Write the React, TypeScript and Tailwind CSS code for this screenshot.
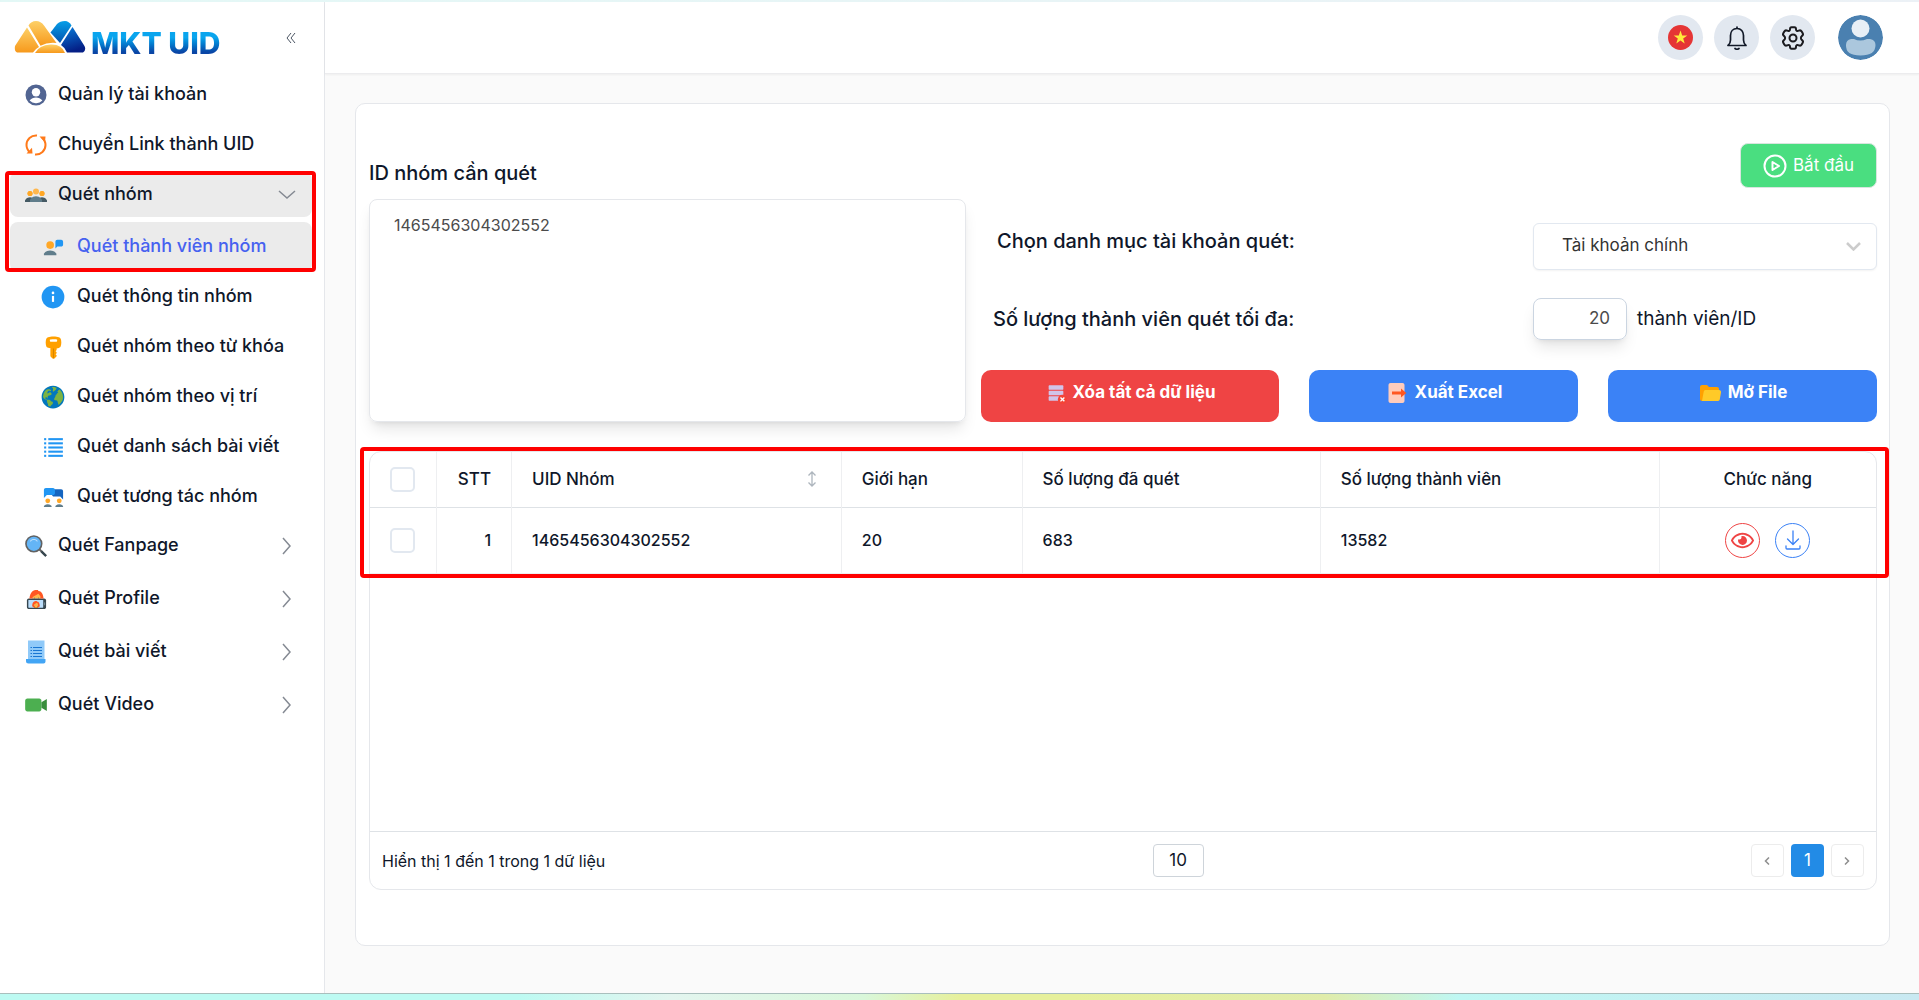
import React, { useState } from "react";
import {
  FcCollaboration,
  FcConferenceCall,
  FcDeleteDatabase,
  FcExport,
  FcGlobe,
  FcInfo,
  FcKey,
  FcList,
  FcOpenedFolder,
  FcSearch,
  FcSelfie,
  FcVideoCall,
  FcVoicePresentation,
} from "react-icons/fc";
import { FaRegEye } from "react-icons/fa";

interface NavItem {
  label: string;
  icon: React.ReactNode;
}

const UserIcon = () => (
  <svg className="w-[22px] h-[22px]" viewBox="0 0 22 22" aria-hidden="true">
    <circle cx="11" cy="11" r="10.5" fill="#526592" />
    <circle cx="11" cy="8.2" r="4.2" fill="#fff" />
    <path d="M4.6 16.6c1.6-2.4 4-3.2 6.4-3.2s4.800.8 6.400 3.200A8.600 8.600 0 0 1 11 19.200a8.600 8.600 0 0 1-6.400-2.600z" fill="#fff" />
  </svg>
);

const SyncIcon = () => (
  <svg className="w-[22px] h-[22px]" viewBox="0 0 22 22" fill="none" stroke="#ff7a1a" strokeWidth="2" aria-hidden="true">
    <path d="M12 1.500C6 1 1.500 5.500 1.500 11c0 3 1.300 5.500 3.500 7.300" />
    <path d="M10 20.500c6 .5 10.500-4 10.500-9.500 0-3-1.300-5.500-3.500-7.300" />
    <path d="M14.500 2.500h6l-.5 5.800z M7.500 19.500h-6L7 13.700z" fill="#ff7a1a" stroke="none" />
  </svg>
);

const PostIcon = () => (
  <svg className="w-[22px] h-[24px]" viewBox="0 0 22 24" aria-hidden="true">
    <path d="M3 0.500h16.500v19H3z" fill="#90caf9" />
    <path d="M1 19h19.500v2.500a2 2 0 0 1-2 2H3.500A2.500 2.500 0 0 1 1 21z" fill="#42a5f5" />
    <path d="M5.500 7.500h1.500M8 7.500h9M5.500 10.500h1.500M8 10.500h9M5.500 13.500h1.500M8 13.500h9M5.500 16.500h1.500M8 16.500h9" stroke="#1976d2" strokeWidth="1.200" />
  </svg>
);

const Chevron = ({ className }: { className: string }) => (
  <svg className={className} viewBox="0 0 18 18" fill="none" stroke="#858a93" strokeWidth="1.500" aria-hidden="true">
    <path d="M5 1l7 8-7 8" />
  </svg>
);

const TOP_ITEMS: NavItem[] = [
  { label: "Quản lý tài khoản", icon: <UserIcon /> },
  { label: "Chuyển Link thành UID", icon: <SyncIcon /> },
];

const GROUP_ITEMS: NavItem[] = [
  { label: "Quét thành viên nhóm", icon: <FcVoicePresentation size={23} /> },
  { label: "Quét thông tin nhóm", icon: <FcInfo size={26} /> },
  { label: "Quét nhóm theo từ khóa", icon: <FcKey size={25} /> },
  { label: "Quét nhóm theo vị trí", icon: <FcGlobe size={26} /> },
  { label: "Quét danh sách bài viết", icon: <FcList size={25} /> },
  { label: "Quét tương tác nhóm", icon: <FcCollaboration size={23} /> },
];

const BOTTOM_ITEMS: NavItem[] = [
  { label: "Quét Fanpage", icon: <FcSearch size={26} className="shrink-0" /> },
  { label: "Quét Profile", icon: <FcSelfie size={23} className="shrink-0" /> },
  { label: "Quét bài viết", icon: <PostIcon /> },
  { label: "Quét Video", icon: <FcVideoCall size={26} className="shrink-0" /> },
];

const COLUMNS = ["UID Nhóm", "Giới hạn", "Số lượng đã quét", "Số lượng thành viên"];

const ROWS = [
  { id: 1, uid: "1465456304302552", limit: 20, scanned: 683, members: 13582 },
];

const Logo = () => (
  <a href="#" className="flex items-end gap-[5px]" aria-label="MKT UID">
    <svg className="w-[72px] h-[33px]" viewBox="0 0 72 33" aria-hidden="true">
      <defs>
        <linearGradient id="gold" x1="0" y1="0" x2="0" y2="1">
          <stop offset="0" stopColor="#fdd067" />
          <stop offset="1" stopColor="#f7991c" />
        </linearGradient>
        <linearGradient id="navy" x1="0" y1="0" x2="0.300" y2="1">
          <stop offset="0" stopColor="#0a7fdc" />
          <stop offset="1" stopColor="#041f86" />
        </linearGradient>
        <linearGradient id="sky" x1="0" y1="0" x2="0" y2="1">
          <stop offset="0" stopColor="#069fe8" />
          <stop offset="1" stopColor="#0453b0" />
        </linearGradient>
      </defs>
      <path d="M13 6.500L25 26q-4 2-6 5.500H3Q0 30 1 25z" fill="url(#gold)" />
      <path d="M14.500 4.500Q17 0 22 0t8 4.500l12.500 17.500q-9-1-16 2.800z" fill="url(#gold)" />
      <path d="M21 32q4-8 15.500-8.500T51 32z" fill="url(#gold)" />
      <path d="M36.500 11.500L43 3q3-3 8-3 4 0 6.500 4.500L46 22z" fill="url(#sky)" />
      <path d="M58.500 6l12 19q2 4-1.500 6.500H53q-2-5-6-7.500z" fill="url(#navy)" />
    </svg>
    <span className="bg-linear-to-b from-[#0aa5ee] from-30% to-[#0a45a5] to-80% bg-clip-text text-[30px] leading-[21px] py-1 -mb-1 font-extrabold text-transparent">
      MKT UID
    </span>
  </a>
);

const Sidebar: React.FC = () => {
  const [isOpen, setIsOpen] = useState(true);

  return (
    <aside className="w-[325px] shrink-0 border-r border-[#e5e7eb] bg-white">
      <div className="flex items-start justify-between pt-[19px] pl-[14px] pr-7 h-[70px]">
        <Logo />
        <button type="button" className="mt-[11px]" aria-label="Thu gọn">
          <svg className="w-[10px] h-[12px]" viewBox="0 0 10 12" fill="none" stroke="#4b5563" aria-hidden="true">
            <path d="M5 1L1 6l4 5M9 1L5 6l4 5" />
          </svg>
        </button>
      </div>
      <nav className="flex flex-col gap-[5px] pl-[10px] pr-3 text-lg" aria-label="Menu chính">
        {TOP_ITEMS.map(({ label, icon }) => (
          <a key={label} href="#" className="flex h-[45px] items-center pl-[15px]">
            <span className="flex w-[22px] justify-center">{icon}</span>
            <span className="ml-[11px] pb-[2px] font-medium">{label}</span>
          </a>
        ))}
        <div className="relative">
          <button
            type="button"
            onClick={() => setIsOpen(!isOpen)}
            aria-expanded={isOpen}
            className="flex h-[45px] w-full items-center rounded-lg bg-[#ebebeb] pl-[15px] pr-4"
          >
            <span className="flex w-[22px] justify-center">
              <FcConferenceCall size={24} className="shrink-0" />
            </span>
            <span className="ml-[11px] pb-[2px] font-medium">Quét nhóm</span>
            <Chevron className="ml-auto w-[18px] h-[18px] rotate-90" />
          </button>
          {isOpen && (
            <div className="mt-[5px]">
              {GROUP_ITEMS.map(({ label, icon }, i) => (
                <a
                  key={label}
                  href="#"
                  className={`flex h-[50px] items-center rounded-lg pl-[30px] ${
                    i === 0 ? "bg-[#ebebeb] text-[#4661f0]" : ""
                  }`}
                >
                  <span className="flex w-[26px] justify-center">{icon}</span>
                  <span className="ml-[11px] pb-[2px] font-medium">{label}</span>
                </a>
              ))}
            </div>
          )}
          {/* Highlight around the active group */}
          <div className="pointer-events-none absolute -left-[5px] -right-1 -top-px h-[101px] rounded-sm border-4 border-[#ff0000]" />
        </div>
        <div className="-mt-[5px] flex flex-col gap-[5px]">
          {BOTTOM_ITEMS.map(({ label, icon }) => (
            <button key={label} type="button" className="flex h-12 items-center pl-[15px] pr-4">
              <span className="flex w-[22px] shrink-0 justify-center">{icon}</span>
              <span className="ml-[11px] pb-[2px] font-medium">{label}</span>
              <Chevron className="ml-auto w-[18px] h-[18px]" />
            </button>
          ))}
        </div>
      </nav>
    </aside>
  );
};

const Header: React.FC = () => (
  <header className="flex h-[72px] shrink-0 items-center justify-end gap-[11px] border-b border-[#ececee] bg-white pr-9 shadow-xs">
    <button type="button" className="flex size-[45px] items-center justify-center rounded-full bg-[#e2e8f0]" aria-label="Ngôn ngữ">
      <svg className="size-[25px]" viewBox="0 0 25 25" aria-hidden="true">
        <circle cx="12.500" cy="12.500" r="12.500" fill="#e53535" />
        <path d="M12.500 5.500l1.700 5h5.100l-4.100 3.100 1.500 5-4.200-3-4.200 3 1.500-5-4.100-3.100h5.100z" fill="#ffeb3b" />
      </svg>
    </button>
    <button type="button" className="flex size-[45px] items-center justify-center rounded-full bg-[#e2e8f0]" aria-label="Thông báo">
      <svg className="size-6" viewBox="0 0 24 24" fill="none" stroke="#111827" strokeWidth="1.700" strokeLinecap="round" strokeLinejoin="round" aria-hidden="true">
        <path d="M12 1v1.500M3 19.500h18q-2.500-2-2.500-5.500V9.500c0-4-2.500-7-6.500-7s-6.500 3-6.500 7V14q0 3.500-2.500 5.500zM10 22.500q2 1.500 4 0" />
      </svg>
    </button>
    <button type="button" className="flex size-[45px] items-center justify-center rounded-full bg-[#e2e8f0]" aria-label="Cài đặt">
      <svg className="size-6" viewBox="0 0 24 24" fill="none" stroke="#1b1b1f" strokeWidth="2" strokeLinejoin="round" aria-hidden="true">
        <path d="M9 3.200Q9 1.300 10.500 1.300h3Q15 1.300 15 3.200c0 1.500 1.200 2.200 2.700 1.500 1.300-.6 2.300-.4 3 .8l1 1.800c.7 1.200.3 2-.9 2.800-1.200.8-1.200 3 0 3.800 1.200.8 1.600 1.600.9 2.800l-1 1.800c-.7 1.200-1.700 1.400-3 .8-1.500-.7-2.700 0-2.700 1.500q0 1.900-1.500 1.900h-3Q9 22.700 9 20.800c0-1.500-1.200-2.200-2.700-1.500-1.300.6-2.300.4-3-.8l-1-1.800c-.7-1.200-.3-2 .9-2.800 1.200-.8 1.200-3 0-3.800-1.200-.8-1.600-1.600-.9-2.800l1-1.800c.7-1.200 1.700-1.400 3-.8C7.800 5.400 9 4.700 9 3.200z" />
        <circle cx="12" cy="12" r="3.500" />
      </svg>
    </button>
    <button type="button" className="ml-3 size-[45px] overflow-hidden rounded-full" aria-label="Tài khoản">
      <svg className="size-full" viewBox="0 0 45 45" aria-hidden="true">
        <circle cx="22.500" cy="22.500" r="22.500" fill="#4a80b0" />
        <path d="M13 24h3q6 3 13 0h3q5.500 1 5.500 6 0 10.500-15 10.500T8 30q0-5 5-6z" fill="#abc7dd" />
        <circle cx="22.500" cy="13.500" r="9" fill="#e8eff6" />
      </svg>
    </button>
  </header>
);

const ScanForm: React.FC = () => (
  <form className="grid grid-cols-[597fr_896fr] gap-[15px]" onSubmit={(e) => e.preventDefault()}>
    <div className="flex flex-col pt-[55px]">
      <label htmlFor="group-ids" className="mb-3 text-xl leading-7 font-medium">
        ID nhóm cần quét
      </label>
      <textarea
        id="group-ids"
        defaultValue="1465456304302552"
        className="flex-1 resize-none rounded-lg border border-[#e5e7eb] px-6 py-[13px] leading-6 text-[#4b4b4b] shadow-lg outline-none"
      />
    </div>
    <div className="flex flex-col pt-[39px]">
      <button
        type="submit"
        className="flex h-[45px] w-[137px] items-center justify-center gap-[6px] self-end rounded-lg border border-[#d9e5df] bg-[#4ade80] text-[17px] text-white"
      >
        <svg className="size-6" viewBox="0 0 24 24" fill="none" stroke="currentColor" strokeWidth="2" strokeLinejoin="round" aria-hidden="true">
          <circle cx="12" cy="12" r="10.500" />
          <path d="M9.500 8l6.500 4-6.500 4z" />
        </svg>
        Bắt đầu
      </button>
      <div className="mt-[35px] flex h-[47px] items-center justify-between pl-4">
        <label htmlFor="category" className="mb-3 text-xl font-medium">
          Chọn danh mục tài khoản quét:
        </label>
        <div className="relative h-full w-[344px]">
          <select
            id="category"
            className="h-full w-full appearance-none rounded-md border border-[#e2e8f0] bg-white pl-7 pb-[2px] text-[17px] text-[#333] shadow-xs outline-none"
          >
            <option>Tài khoản chính</option>
          </select>
          <svg className="pointer-events-none absolute right-4 top-[19px] h-[9px] w-[15px]" viewBox="0 0 15 9" fill="none" stroke="#ccc" strokeWidth="2.500" aria-hidden="true">
            <path d="M1 1l6.500 6.500L14 1" />
          </svg>
        </div>
      </div>
      <div className="mt-7 flex h-[42px] items-center justify-between pl-3">
        <label htmlFor="max-members" className="text-xl font-medium">
          Số lượng thành viên quét tối đa:
        </label>
        <div className="flex h-full w-[344px] items-center">
          <input
            id="max-members"
            type="text"
            inputMode="numeric"
            defaultValue="20"
            className="mr-[10px] h-full w-[94px] rounded-lg border border-[#cbd5e1] pr-4 pb-[2px] text-right text-[17px] text-[#4b4b4b] shadow-lg outline-none"
          />
          <span className="text-[19px]">thành viên/ID</span>
        </div>
      </div>
      <div className="mt-[30px] grid grid-cols-[298fr_269fr_269fr] gap-[30px] text-[17px] font-bold text-white">
        <button type="button" className="flex h-[52px] items-center justify-center gap-[6px] rounded-[10px] bg-[#ef4444] pb-[6px]">
          <FcDeleteDatabase size={22} />
          Xóa tất cả dữ liệu
        </button>
        <button type="button" className="flex h-[52px] items-center justify-center gap-[6px] rounded-[10px] bg-[#3b82f6] pb-[6px]">
          <FcExport size={24} />
          Xuất Excel
        </button>
        <button type="button" className="flex h-[52px] items-center justify-center gap-[6px] rounded-[10px] bg-[#3b82f6] pb-[6px]">
          <FcOpenedFolder size={24} />
          Mở File
        </button>
      </div>
    </div>
  </form>
);

const Checkbox = ({ label }: { label: string }) => (
  <input
    type="checkbox"
    aria-label={label}
    className="block size-[25px] appearance-none rounded-[5px] border-2 border-[#e2e8f0] bg-white mx-auto checked:bg-blue-500"
  />
);

const GroupTable: React.FC = () => (
  <div className="relative mt-[29px] flex flex-1 flex-col rounded-xl border border-[#e5e7eb]">
    <table className="w-full table-fixed border-collapse text-left">
      <colgroup>
        <col className="w-[4.4%]" />
        <col className="w-[5%]" />
        <col className="w-[21.9%]" />
        <col className="w-[12%]" />
        <col className="w-[19.8%]" />
        <col className="w-[22.5%]" />
        <col />
      </colgroup>
      <thead>
        <tr className="h-[55px] border-b border-[#dee2e6] text-[17px]">
          <th className="border-r border-[#eeeff1]">
            <Checkbox label="Chọn tất cả" />
          </th>
          <th className="border-r border-[#eeeff1] pr-5 text-right font-medium">STT</th>
          {COLUMNS.map((column, i) => (
            <th key={column} className="border-r border-[#eeeff1] px-5 font-medium">
              <span className="flex items-center justify-between">
                {column}
                {i === 0 && (
                  <svg className="mr-1 h-4 w-[10px]" viewBox="0 0 10 16" fill="none" stroke="#adb5bd" strokeWidth="1.300" aria-hidden="true">
                    <path d="M5 1v14M1.500 4.500L5 1l3.500 3.500M1.500 11.500L5 15l3.500-3.500" />
                  </svg>
                )}
              </span>
            </th>
          ))}
          <th className="text-center font-medium">Chức năng</th>
        </tr>
      </thead>
      <tbody>
        {ROWS.map((row) => (
          <tr key={row.id} className="h-[66px] border-b border-[#eeeff1] font-medium">
            <td className="border-r border-[#eeeff1]">
              <Checkbox label={`Chọn nhóm ${row.uid}`} />
            </td>
            <td className="border-r border-[#eeeff1] pr-5 text-right">{row.id}</td>
            <td className="border-r border-[#eeeff1] px-5">{row.uid}</td>
            <td className="border-r border-[#eeeff1] px-5">{row.limit}</td>
            <td className="border-r border-[#eeeff1] px-5">{row.scanned}</td>
            <td className="border-r border-[#eeeff1] px-5">{row.members}</td>
            <td>
              <div className="flex justify-center gap-[15px]">
                <button
                  type="button"
                  aria-label="Xem"
                  className="flex size-[35px] items-center justify-center rounded-full border border-[#ef4444] text-[#ef4444]"
                >
                  <FaRegEye size={23} />
                </button>
                <button
                  type="button"
                  aria-label="Tải xuống"
                  className="flex size-[35px] items-center justify-center rounded-full border border-[#3b82f6] text-[#3b82f6]"
                >
                  <svg className="h-5 w-4" viewBox="0 0 16 20" fill="none" stroke="currentColor" strokeWidth="1.300" strokeLinecap="round" strokeLinejoin="round" aria-hidden="true">
                    <path d="M8 1v13M2.500 9L8 14.500 13.500 9M1 16v2q0 1 1 1h12q1 0 1-1v-2" />
                  </svg>
                </button>
              </div>
            </td>
          </tr>
        ))}
      </tbody>
    </table>
    <div className="mt-auto flex h-[58px] items-center justify-between border-t border-[#dee2e6] px-3">
      <p>Hiển thị 1 đến 1 trong 1 dữ liệu</p>
      <select
        aria-label="Số dòng mỗi trang"
        className="h-[33px] w-[51px] appearance-none rounded-sm border border-[#ced4da] text-center text-[17px] leading-none outline-none"
      >
        <option>10</option>
      </select>
      <div className="flex gap-[7px]">
        <button type="button" aria-label="Trang trước" className="flex size-[33px] items-center justify-center rounded border border-[#ececec]">
          <svg className="h-2 w-[6px]" viewBox="0 0 6 8" fill="none" stroke="#8d8d8d" strokeWidth="1.500" aria-hidden="true">
            <path d="M5 0.500L1.500 4 5 7.500" />
          </svg>
        </button>
        <button type="button" aria-current="page" className="size-[33px] rounded bg-[#228be6] text-[17px] leading-none text-white">
          1
        </button>
        <button type="button" aria-label="Trang sau" className="flex size-[33px] items-center justify-center rounded border border-[#ececec]">
          <svg className="h-2 w-[6px]" viewBox="0 0 6 8" fill="none" stroke="#8d8d8d" strokeWidth="1.500" aria-hidden="true">
            <path d="M1 0.500L4.500 4 1 7.500" />
          </svg>
        </button>
      </div>
    </div>
    {/* Highlight around the results */}
    <div className="pointer-events-none absolute -left-[10px] -right-[13px] -top-[5px] h-[131px] rounded-sm border-4 border-[#ff0000]" />
  </div>
);

const App: React.FC = () => (
  <div className="flex min-h-screen flex-col bg-[#fafafa] font-['Inter','Noto_Sans',sans-serif] text-base text-[#0f172a]">
    <div className="h-[2px] bg-linear-to-r from-[#e3f8f6] to-[#ecf1f6]" />
    <div className="flex flex-1">
      <Sidebar />
      <div className="flex min-w-0 flex-1 flex-col">
        <Header />
        <main className="flex flex-1 flex-col pt-[29px] pr-[29px] pb-[47px] pl-[30px]">
          <section className="flex flex-1 flex-col rounded-[10px] border border-[#e5e7eb] bg-white pl-[13px] pr-3 pb-[55px]">
            <ScanForm />
            <GroupTable />
          </section>
        </main>
      </div>
    </div>
    <div className="h-[7px] border-t border-[#a9bfbd] bg-[linear-gradient(90deg,#bdfaf2_27%,#e3f5ef_35%,#d9f7da_45%,#e6f09c_50%,#e6f09c_56%,#e0ecaa_69%,#bff7f3_76%,#c9e9f2)]" />
  </div>
);

export default App;
